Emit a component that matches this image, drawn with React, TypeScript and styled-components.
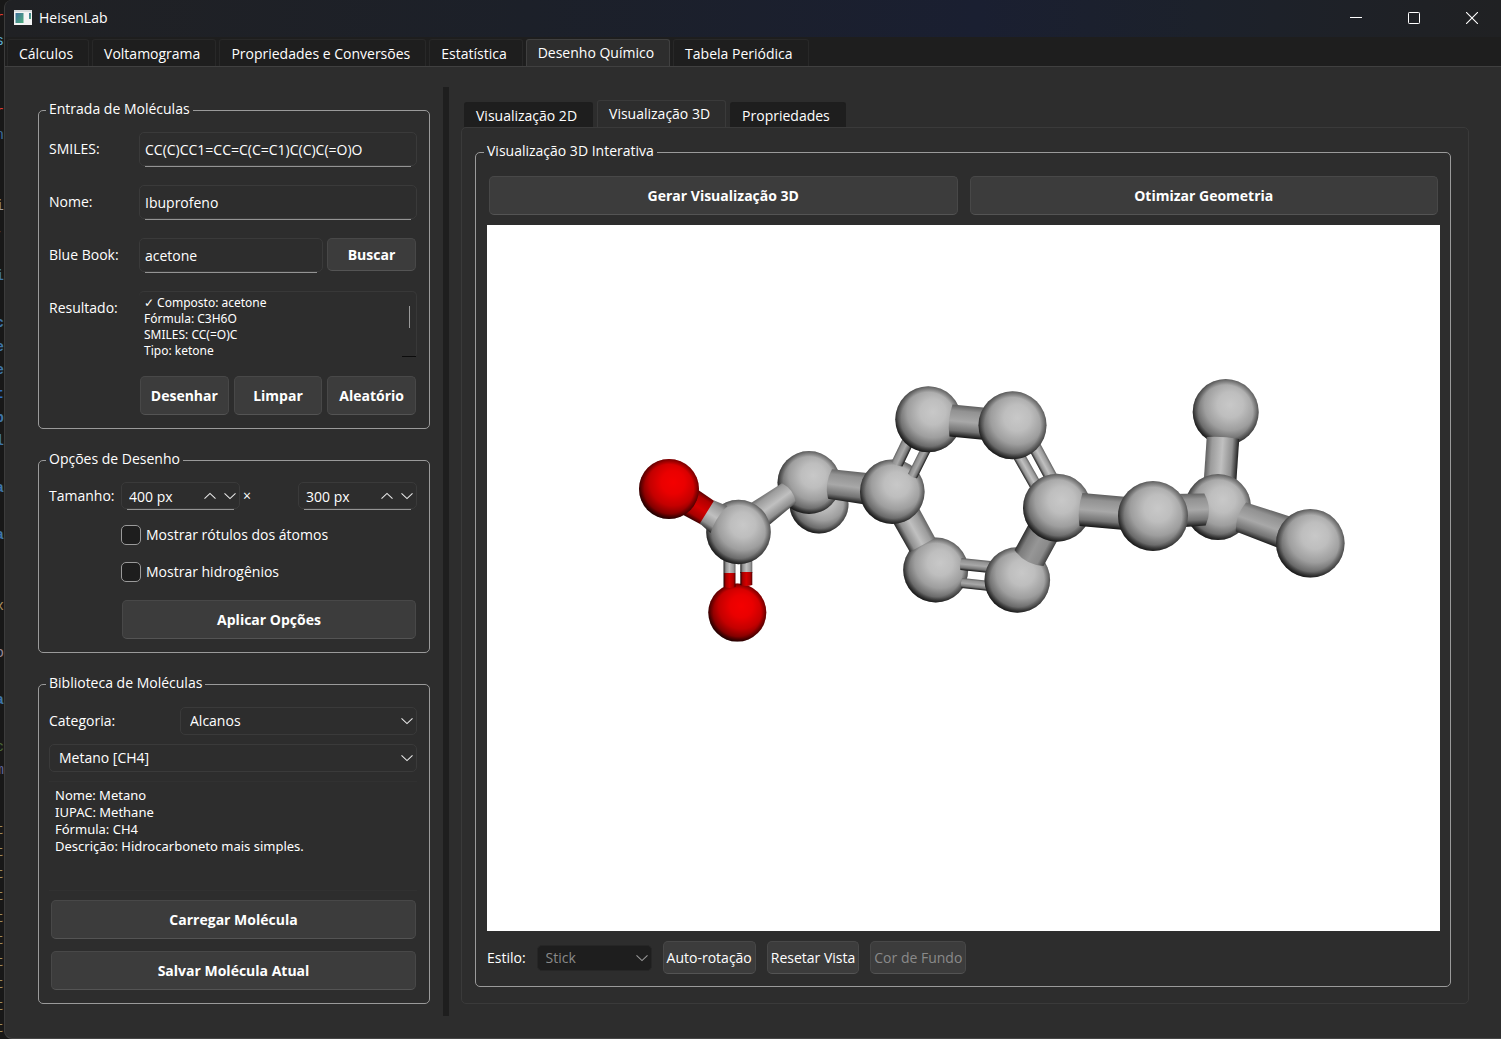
import React, { useState } from "react";
import styled, { createGlobalStyle, css } from "styled-components";

const GlobalStyle = createGlobalStyle`
  *, *::before, *::after { box-sizing: border-box; }
  body { margin: 0; background: #181818; }
  body, button, input, select, textarea {
    font-family: "Open Sans", "Noto Sans", sans-serif;
    font-size: 14px;
    line-height: 20px;
    color: #ffffff;
  }
`;

const Desktop = styled.div`
  display: flex;
  min-height: 100vh;
  background: #181818;
`;

/* Editor window lying behind, of which only the edge is visible */
const EditorEdge = styled.div`
  flex: 0 0 4px;
  height: 100vh;
  overflow: hidden;
  display: flex;
  flex-direction: column;
  gap: 37px;
  padding-top: 6px;
  font-family: "Liberation Mono", monospace;
`;

const CodeBlock = styled.div`
  flex: 1;
  display: grid;
  grid-auto-rows: 1fr;
`;

const TerminalBlock = styled.div`
  flex: 0 0 215px;
  display: grid;
  grid-auto-rows: 22px;
`;

const CodeLine = styled.span<{ $color: string; $bold?: boolean }>`
  display: flex;
  justify-content: flex-end;
  align-items: center;
  width: 4px;
  overflow: hidden;
  color: ${(p) => p.$color};
  font-weight: ${(p) => (p.$bold ? 700 : 400)};
`;

const Window = styled.main`
  flex: 1;
  min-width: 0;
  display: flex;
  flex-direction: column;
  border-left: 1px solid #3c3c3c;
  border-bottom: 1px solid #454545;
  border-radius: 8px 0 0 8px;
  background: #2d2d2d;
  overflow: hidden;
`;

const TitleBar = styled.header`
  display: flex;
  align-items: center;
  height: 37px;
  padding: 0 0 2px 9px;
  background: linear-gradient(90deg, #202124 0%, #1c2029 35%, #1a1f31 65%, #1c212b 80%, #202123 100%);
`;

const AppName = styled.h1`
  flex: 1;
  margin: 0;
  padding-left: 7px;
  font-size: 14px;
  font-weight: 400;
`;

const CaptionButton = styled.button`
  display: flex;
  align-items: center;
  justify-content: center;
  width: 58px;
  height: 34px;
  padding: 0;
  border: 0;
  background: none;
`;

const TabBar = styled.nav`
  display: flex;
  align-items: flex-end;
  gap: 3px;
  height: 30px;
  padding-left: 2px;
  background: #1e1e1e;
  border-bottom: 1px solid #404040;
`;

const MainTab = styled.button<{ $active?: boolean }>`
  height: 27px;
  padding: ${(p) => (p.$active ? "0 15px 0 11px" : "2px 15px 0 11px")};
  border: 1px solid ${(p) => (p.$active ? "#404040" : "#282828")};
  border-bottom: 0;
  border-radius: 3px 3px 0 0;
  background: ${(p) => (p.$active ? "#2d2d2d" : "#1e1e1e")};
  white-space: nowrap;
`;

const Workspace = styled.div`
  flex: 1;
  display: flex;
  padding: 20px 32px 22px 33px;
`;

const Sidebar = styled.div`
  flex: 0 0 392px;
  display: flex;
  flex-direction: column;
  gap: 20px;
  padding: 12px 0;
`;

const Splitter = styled.div`
  flex: 0 0 6px;
  margin: 0 12px 0 13px;
  background: #1e1e1e;
`;

const Group = styled.fieldset`
  min-width: 0;
  margin: 0;
  padding: 0 12px 13px 10px;
  border: 1px solid #9a9a9a;
  border-radius: 5px;
`;

const GroupTitle = styled.legend`
  margin-left: -3px;
  padding: 0 3px 2px;
`;

const EntryGrid = styled.div`
  display: grid;
  grid-template-columns: 72px minmax(0, 1fr);
  column-gap: 18px;
  row-gap: 18px;
  padding-top: 11px;
`;

const RowLabel = styled.label`
  padding-top: 7px;
  white-space: nowrap;
`;

const ButtonTriple = styled.div`
  grid-column: 2;
  display: grid;
  grid-template-columns: repeat(3, minmax(0, 1fr));
  gap: 5px;
  padding: 0 1px;
`;

const SearchRow = styled.div`
  display: flex;
  align-items: flex-start;
  gap: 4px;
  padding-right: 1px;
`;

const Field = styled.div<{ $line?: number }>`
  flex: 1;
  min-width: 0;
  display: flex;
  padding-bottom: 1px;
  background: linear-gradient(#949494, #949494) center bottom / calc(100% - 12px) ${(p) => p.$line ?? 1}px no-repeat;
`;

const TextInput = styled.input`
  flex: 1;
  min-width: 0;
  height: 34px;
  padding: 0 5px;
  border: 1px solid #3a3a3a;
  border-radius: 5px;
  background: #2d2d2d;
  outline: 0;
`;

const buttonFace = css`
  border: 1px solid #484848;
  border-bottom-color: #545454;
  border-radius: 5px;
  background: #3c3c3c;
  white-space: nowrap;
`;

const PushButton = styled.button<{ $compact?: boolean }>`
  ${buttonFace}
  height: ${(p) => (p.$compact ? 33 : 39)}px;
  min-width: ${(p) => (p.$compact ? 89 : 0)}px;
  padding: 0 4px;
  font-weight: 700;
`;

const ToolButton = styled.button`
  ${buttonFace}
  height: 33px;
  padding: 0 3px;
  &:disabled { color: #8a8a8a; }
`;

const ResultBox = styled.div`
  position: relative;
  height: 67px;
  border: solid #383838;
  border-width: 1px 1px 0 0;
  border-radius: 5px;
`;

const ResultText = styled.textarea`
  display: block;
  width: 100%;
  height: 66px;
  padding: 3px 20px 0 5px;
  border: 0;
  outline: 0;
  resize: none;
  overflow: hidden;
  background: none;
  font-family: "Noto Sans", sans-serif;
  font-size: 12px;
  line-height: 16px;
`;

const ScrollThumb = styled.span`
  position: absolute;
  top: 14px;
  right: 6px;
  width: 1px;
  height: 22px;
  background: #9a9a9a;
`;

const ScrollCorner = styled.span`
  position: absolute;
  right: 0;
  bottom: 1px;
  width: 14px;
  height: 1px;
  background: #0c0c0c;
`;

const SizeRow = styled.div`
  display: flex;
  align-items: flex-start;
  padding-top: 11px;
`;

const SizeLabel = styled.label`
  width: 72px;
  padding-top: 4px;
  white-space: nowrap;
`;

const Times = styled.span`
  flex: 1;
  padding: 4px 0 0 3px;
`;

const SpinField = styled(Field)`
  position: relative;
  flex: 0 0 119px;
`;

const SpinInput = styled(TextInput)`
  height: 27px;
  padding: 2px 44px 0 7px;
`;

const SpinButtons = styled.span`
  position: absolute;
  top: 4px;
  right: 0;
  display: flex;
`;

const SpinButton = styled.button`
  display: flex;
  align-items: center;
  justify-content: center;
  width: 20px;
  height: 20px;
  padding: 0;
  border: 0;
  background: none;
`;

const OptionColumn = styled.div`
  display: flex;
  flex-direction: column;
  gap: 16px;
  padding: 14px 1px 0 72px;
`;

const CheckLabel = styled.label`
  display: flex;
  align-items: center;
  gap: 5px;
  height: 21px;
`;

const CheckBox = styled.input`
  appearance: none;
  width: 20px;
  height: 20px;
  margin: 0;
  border: 1px solid #9a9a9a;
  border-radius: 5px;
  background: #1e1e1e;
  &:checked { background: #4cc2ff; }
`;

const ApplyButton = styled(PushButton)`
  margin: 2px 0 0 1px;
`;

const LibraryStack = styled.div`
  display: flex;
  flex-direction: column;
  gap: 9px;
  padding-top: 12px;
`;

const CategoryRow = styled.div`
  display: flex;
  align-items: center;
  justify-content: space-between;
`;

const SelectBox = styled.span<{ $width?: number }>`
  position: relative;
  display: flex;
  width: ${(p) => (p.$width ? `${p.$width}px` : "auto")};
`;

const Select = styled.select<{ $muted?: boolean }>`
  appearance: none;
  flex: 1;
  height: ${(p) => (p.$muted ? 26 : 28)}px;
  padding: 0 28px 0 ${(p) => (p.$muted ? 8 : 9)}px;
  border: 1px solid ${(p) => (p.$muted ? "#262626" : "#3a3a3a")};
  border-radius: 5px;
  background: ${(p) => (p.$muted ? "#1e1e1e" : "#2d2d2d")};
  outline: 0;
  &:disabled { color: #8a8a8a; opacity: 1; }
`;

const SelectArrow = styled.span`
  position: absolute;
  top: 0;
  right: 4px;
  bottom: 0;
  display: flex;
  align-items: center;
  pointer-events: none;
`;

const MoleculeInfo = styled.textarea`
  display: block;
  height: 110px;
  padding: 5px 6px;
  border: solid #313131;
  border-width: 1px 0;
  outline: 0;
  resize: none;
  overflow: hidden;
  background: none;
  font-family: "Noto Sans", sans-serif;
  font-size: 13px;
  line-height: 17px;
`;

const LibraryButtons = styled.div`
  display: grid;
  gap: 12px;
  padding: 0 1px 0 2px;
`;

const Viewer = styled.section`
  flex: 1;
  min-width: 0;
  display: flex;
  flex-direction: column;
  padding: 14px 0 12px;
`;

const ViewerTabs = styled.div`
  display: flex;
  align-items: flex-end;
  gap: 4px;
  height: 26px;
  padding-left: 3px;
`;

const ViewerTab = styled.button<{ $active?: boolean }>`
  height: ${(p) => (p.$active ? 27 : 25)}px;
  padding: ${(p) => (p.$active ? "0 15px 0 11px" : "2px 15px 0 11px")};
  border: ${(p) => (p.$active ? "1px solid #3a3a3a" : "1px solid #1e1e1e")};
  border-bottom: 0;
  border-radius: 3px 3px 0 0;
  background: ${(p) => (p.$active ? "#2d2d2d" : "#1e1e1e")};
  white-space: nowrap;
`;

const ViewerPane = styled.div`
  flex: 1;
  display: flex;
  flex-direction: column;
  padding: 13px 17px 16px 13px;
  border: 1px solid #3a3a3a;
  border-radius: 5px;
`;

const ViewerGroup = styled(Group)`
  flex: 1;
  display: flex;
  flex-direction: column;
  padding: 0 10px 12px 11px;
`;

const ActionRow = styled.div`
  display: grid;
  grid-template-columns: 1fr 1fr;
  gap: 12px;
  padding: 13px 2px 10px;
`;

const Canvas = styled.svg`
  flex: 1 1 0;
  min-height: 400px;
  width: 100%;
  background: #ffffff;
`;

const ViewToolbar = styled.div`
  display: flex;
  align-items: center;
  gap: 11px;
  padding-top: 10px;
`;

const Chevron = ({ up, color = "#e8e8e8" }: { up?: boolean; color?: string }) => (
  <svg width="12" height="8" viewBox="0 0 12 8" fill="none" stroke={color} strokeWidth="1.1" aria-hidden="true">
    <path d={up ? "M0.5 6.6 L6 1.4 L11.5 6.6" : "M0.5 1.4 L6 6.6 L11.5 1.4"} />
  </svg>
);

type Tone = "light" | "mid" | "dark" | "red";

const Atom = ({ x, y, r, oxygen }: { x: number; y: number; r: number; oxygen?: boolean }) => (
  <g>
    <circle cx={x} cy={y} r={r} fill={oxygen ? "url(#oxygen)" : "url(#carbon)"} />
    <circle cx={x} cy={y} r={r} fill="url(#rim)" />
  </g>
);

/* A cylinder from one point to another; caps bulge outwards when positive */
const Bond = ({
  from, to, w, w2 = w, cap = 0, endCap = 0, tone = "mid",
}: {
  from: [number, number]; to: [number, number]; w: number; w2?: number; cap?: number; endCap?: number; tone?: Tone;
}) => {
  const dx = to[0] - from[0];
  const dy = to[1] - from[1];
  const len = Math.hypot(dx, dy);
  const angle = (Math.atan2(dy, dx) * 180) / Math.PI;
  return (
    <path
      transform={`translate(${from[0]} ${from[1]}) rotate(${angle})`}
      d={`M0 ${-w} L${len} ${-w2} Q${len + endCap * 2} 0 ${len} ${w2} L0 ${w} Q${-cap * 2} 0 0 ${-w} Z`}
      fill={`url(#tube-${tone})`}
    />
  );
};

const tubes: Record<Tone, string[]> = {
  light: ["#606060", "#9c9c9c", "#c0c0c0", "#909090", "#202020"],
  mid: ["#606060", "#929292", "#a8a8a8", "#747474", "#141414"],
  dark: ["#303030", "#7c7c7c", "#969696", "#8a8a8a", "#404040"],
  red: ["#500000", "#b00000", "#d40000", "#a80000", "#200000"],
};

const Molecule = () => (
  <Canvas viewBox="487 225 953 706" role="img" aria-label="Ibuprofeno em 3D">
    <defs>
      <radialGradient id="carbon" cx="0.57" cy="0.39" r="0.65">
        <stop offset="0" stopColor="#c8c8c8" />
        <stop offset="0.3" stopColor="#bebebe" />
        <stop offset="0.6" stopColor="#9e9e9e" />
        <stop offset="0.82" stopColor="#6a6a6a" />
        <stop offset="1" stopColor="#161616" />
      </radialGradient>
      <radialGradient id="oxygen" cx="0.57" cy="0.39" r="0.65">
        <stop offset="0" stopColor="#f40000" />
        <stop offset="0.3" stopColor="#ea0000" />
        <stop offset="0.6" stopColor="#c40000" />
        <stop offset="0.82" stopColor="#820000" />
        <stop offset="1" stopColor="#200000" />
      </radialGradient>
      <radialGradient id="rim">
        <stop offset="0.82" stopColor="#000" stopOpacity="0" />
        <stop offset="1" stopColor="#000" stopOpacity="0.4" />
      </radialGradient>
      {(Object.keys(tubes) as Tone[]).map((tone) => (
        <linearGradient key={tone} id={`tube-${tone}`} x1="0" y1="0" x2="0" y2="1">
          {tubes[tone].map((color, i) => (
            <stop key={i} offset={[0, 0.18, 0.5, 0.8, 1][i]} stopColor={color} />
          ))}
        </linearGradient>
      ))}
    </defs>
    <Atom x={819} y={504} r={29.5} />
    <Atom x={809} y={482.5} r={31.5} />
    <Bond from={[745, 525]} to={[789, 493]} w={15.5} w2={12} endCap={3} tone="light" />
    <Bond from={[685, 499]} to={[708, 513]} w={15} w2={13.5} tone="red" />
    <Atom x={669} y={489} r={30} oxygen />
    <Bond from={[729.5, 555]} to={[729.5, 573]} w={6} tone="light" />
    <Bond from={[746.3, 555]} to={[746.3, 573]} w={6} tone="light" />
    <Atom x={737.3} y={612.6} r={29} oxygen />
    <Bond from={[729.5, 573]} to={[729.5, 587]} w={6} endCap={1} tone="red" />
    <Bond from={[746.3, 572]} to={[746.3, 585]} w={6} endCap={1} tone="red" />
    <Atom x={738.5} y={532} r={32.3} />
    <Bond from={[707, 512]} to={[719, 519.5]} w={13.5} w2={16} endCap={-2} tone="light" cap={0} />
    <Bond from={[830, 484]} to={[872, 489.5]} w={15} w2={16} cap={3} />
    <Atom x={935.7} y={570} r={32.5} />
    <Bond from={[898, 501]} to={[922.5, 545]} w={15} w2={14.5} tone="light" />
    <Atom x={892.3} y={491.7} r={32.3} />
    <Bond from={[897, 464]} to={[911, 435]} w={6} cap={1} />
    <Bond from={[912.5, 476]} to={[927, 447]} w={5} cap={1} />
    <Atom x={928.3} y={419.3} r={33} />
    <Bond from={[951, 420.5]} to={[992, 424.5]} w={16} cap={2} />
    <Bond from={[1015, 449]} to={[1036, 486]} w={6} tone="light" />
    <Bond from={[1031, 440]} to={[1052, 479]} w={6.5} tone="light" />
    <Bond from={[961, 564]} to={[990, 567]} w={6} cap={1} />
    <Bond from={[962, 583]} to={[990, 586]} w={5} cap={1} />
    <Atom x={1012.5} y={425.3} r={34} />
    <Atom x={1017.3} y={580} r={32.8} />
    <Bond from={[1029, 558]} to={[1047, 525]} w={16.5} cap={4} tone="dark" />
    <Atom x={1057} y={507.7} r={34} />
    <Bond from={[1081, 509.5]} to={[1126, 513.5]} w={16.5} cap={2} />
    <Atom x={1225.7} y={412} r={33} />
    <Bond from={[1220, 482]} to={[1223, 438]} w={16.3} endCap={1} tone="light" />
    <Atom x={1218} y={507} r={33} />
    <Bond from={[1241, 517]} to={[1292, 535]} w={15.5} w2={17} cap={3} />
    <Bond from={[1170, 511]} to={[1205, 509.5]} w={17} w2={16} endCap={4} />
    <Atom x={1153} y={516} r={35} />
    <Atom x={1310.3} y={543.3} r={34.3} />
  </Canvas>
);

const CODE: Record<number, [string, string, boolean?]> = {
  0: ["r", "#e03c31"], 1: ["s", "#5fb3dc"], 4: ["r", "#e03c31"], 5: ["n", "#3f6fa0"],
  8: ["i", "#9a9a9a"], 9: [",", "#9a9a9a"], 11: ["i", "#3f76a8", true], 13: ["c", "#3f76a8", true],
  14: ["e", "#3f76a8", true], 15: ["e", "#3f76a8", true], 16: ["t", "#2f6cc0", true],
  17: ["p", "#3f76a8", true], 18: ["l", "#3f76a8", true], 20: ["a", "#3f76a8", true],
  22: ["a", "#3f76a8", true], 25: ["x", "#a89060"], 27: ["o", "#9a8a98"],
  29: ["a", "#3f76a8", true], 31: ["c", "#4c6a38"], 32: ["m", "#6068a0"],
};

const MAIN_TABS = ["Cálculos", "Voltamograma", "Propriedades e Conversões", "Estatística", "Desenho Químico", "Tabela Periódica"];
const VIEW_TABS = ["Visualização 2D", "Visualização 3D", "Propriedades"];

const SpinBox = ({ id, initial, label }: { id: string; initial: number; label?: string }) => {
  const [value, setValue] = useState(initial);
  return (
    <SpinField $line={2}>
      <SpinInput
        id={id}
        aria-label={label}
        value={`${value} px`}
        onChange={(e) => setValue(parseInt(e.target.value, 10) || 0)}
      />
      <SpinButtons>
        <SpinButton type="button" aria-label="Aumentar" onClick={() => setValue(value + 10)}><Chevron up /></SpinButton>
        <SpinButton type="button" aria-label="Diminuir" onClick={() => setValue(value - 10)}><Chevron /></SpinButton>
      </SpinButtons>
    </SpinField>
  );
};

export default function App() {
  const [tab, setTab] = useState(4);
  const [view, setView] = useState(1);
  return (
    <Desktop>
      <GlobalStyle />
      <EditorEdge aria-hidden="true">
        <CodeBlock>
          {Array.from({ length: 33 }, (_, i) => {
            const [glyph, color, bold] = CODE[i] ?? ["", "#9a9a9a"];
            return <CodeLine key={i} $color={color} $bold={bold}>{glyph}</CodeLine>;
          })}
        </CodeBlock>
        <TerminalBlock>
          {Array.from({ length: 10 }, (_, i) => <CodeLine key={i} $color="#a08c5c">t</CodeLine>)}
        </TerminalBlock>
      </EditorEdge>
      <Window>
        <TitleBar>
          <svg width="18" height="15" viewBox="0 0 18 15" aria-hidden="true">
            <defs>
              <linearGradient id="logo" x1="0" y1="0" x2="1" y2="1">
                <stop offset="0" stopColor="#3f6f9c" />
                <stop offset="1" stopColor="#4fae7c" />
              </linearGradient>
            </defs>
            <rect width="18" height="15" fill="#f4f4f4" />
            <rect width="18" height="2" fill="#d8dcde" />
            <rect x="1.5" y="3" width="8" height="10" fill="url(#logo)" />
            <rect x="15" y="3" width="2" height="6" fill="url(#logo)" />
          </svg>
          <AppName>HeisenLab</AppName>
          <CaptionButton type="button" aria-label="Minimizar">
            <svg width="12" height="12" stroke="#fff"><path d="M0 5.5H12" /></svg>
          </CaptionButton>
          <CaptionButton type="button" aria-label="Maximizar">
            <svg width="12" height="12" fill="none" stroke="#fff"><rect x="0.5" y="0.5" width="11" height="11" rx="0.8" /></svg>
          </CaptionButton>
          <CaptionButton type="button" aria-label="Fechar">
            <svg width="12" height="12" stroke="#fff" strokeWidth="1.1"><path d="M0 0L12 12M12 0L0 12" /></svg>
          </CaptionButton>
        </TitleBar>
        <TabBar>
          {MAIN_TABS.map((name, i) => (
            <MainTab key={name} type="button" $active={i === tab} onClick={() => setTab(i)}>{name}</MainTab>
          ))}
        </TabBar>
        <Workspace>
          <Sidebar>
            <Group>
              <GroupTitle>Entrada de Moléculas</GroupTitle>
              <EntryGrid>
                <RowLabel htmlFor="smiles">SMILES:</RowLabel>
                <Field><TextInput id="smiles" defaultValue="CC(C)CC1=CC=C(C=C1)C(C)C(=O)O" /></Field>
                <RowLabel htmlFor="nome">Nome:</RowLabel>
                <Field><TextInput id="nome" defaultValue="Ibuprofeno" /></Field>
                <RowLabel htmlFor="bluebook">Blue Book:</RowLabel>
                <SearchRow>
                  <Field><TextInput id="bluebook" defaultValue="acetone" /></Field>
                  <PushButton type="button" $compact>Buscar</PushButton>
                </SearchRow>
                <RowLabel htmlFor="resultado">Resultado:</RowLabel>
                <ResultBox>
                  <ResultText id="resultado" readOnly value={"✓ Composto: acetone\nFórmula: C3H6O\nSMILES: CC(=O)C\nTipo: ketone"} />
                  <ScrollThumb />
                  <ScrollCorner />
                </ResultBox>
                <ButtonTriple>
                  <PushButton type="button">Desenhar</PushButton>
                  <PushButton type="button">Limpar</PushButton>
                  <PushButton type="button">Aleatório</PushButton>
                </ButtonTriple>
              </EntryGrid>
            </Group>
            <Group>
              <GroupTitle>Opções de Desenho</GroupTitle>
              <SizeRow>
                <SizeLabel htmlFor="largura">Tamanho:</SizeLabel>
                <SpinBox id="largura" initial={400} />
                <Times>×</Times>
                <SpinBox id="altura" initial={300} label="Altura" />
              </SizeRow>
              <OptionColumn>
                <CheckLabel><CheckBox type="checkbox" />Mostrar rótulos dos átomos</CheckLabel>
                <CheckLabel><CheckBox type="checkbox" />Mostrar hidrogênios</CheckLabel>
                <ApplyButton type="button">Aplicar Opções</ApplyButton>
              </OptionColumn>
            </Group>
            <Group>
              <GroupTitle>Biblioteca de Moléculas</GroupTitle>
              <LibraryStack>
                <CategoryRow>
                  <label htmlFor="categoria">Categoria:</label>
                  <SelectBox $width={237}>
                    <Select id="categoria"><option>Alcanos</option></Select>
                    <SelectArrow><Chevron /></SelectArrow>
                  </SelectBox>
                </CategoryRow>
                <SelectBox>
                  <Select aria-label="Molécula"><option>Metano [CH4]</option></Select>
                  <SelectArrow><Chevron /></SelectArrow>
                </SelectBox>
                <MoleculeInfo
                  readOnly
                  aria-label="Detalhes da molécula"
                  value={"Nome: Metano\nIUPAC: Methane\nFórmula: CH4\nDescrição: Hidrocarboneto mais simples."}
                />
                <LibraryButtons>
                  <PushButton type="button">Carregar Molécula</PushButton>
                  <PushButton type="button">Salvar Molécula Atual</PushButton>
                </LibraryButtons>
              </LibraryStack>
            </Group>
          </Sidebar>
          <Splitter />
          <Viewer>
            <ViewerTabs>
              {VIEW_TABS.map((name, i) => (
                <ViewerTab key={name} type="button" $active={i === view} onClick={() => setView(i)}>{name}</ViewerTab>
              ))}
            </ViewerTabs>
            <ViewerPane>
              <ViewerGroup>
                <GroupTitle>Visualização 3D Interativa</GroupTitle>
                <ActionRow>
                  <PushButton type="button">Gerar Visualização 3D</PushButton>
                  <PushButton type="button">Otimizar Geometria</PushButton>
                </ActionRow>
                <Molecule />
                <ViewToolbar>
                  <label htmlFor="estilo">Estilo:</label>
                  <SelectBox $width={115}>
                    <Select id="estilo" $muted disabled><option>Stick</option></Select>
                    <SelectArrow><Chevron color="#9a9a9a" /></SelectArrow>
                  </SelectBox>
                  <ToolButton type="button">Auto-rotação</ToolButton>
                  <ToolButton type="button">Resetar Vista</ToolButton>
                  <ToolButton type="button" disabled>Cor de Fundo</ToolButton>
                </ViewToolbar>
              </ViewerGroup>
            </ViewerPane>
          </Viewer>
        </Workspace>
      </Window>
    </Desktop>
  );
}
